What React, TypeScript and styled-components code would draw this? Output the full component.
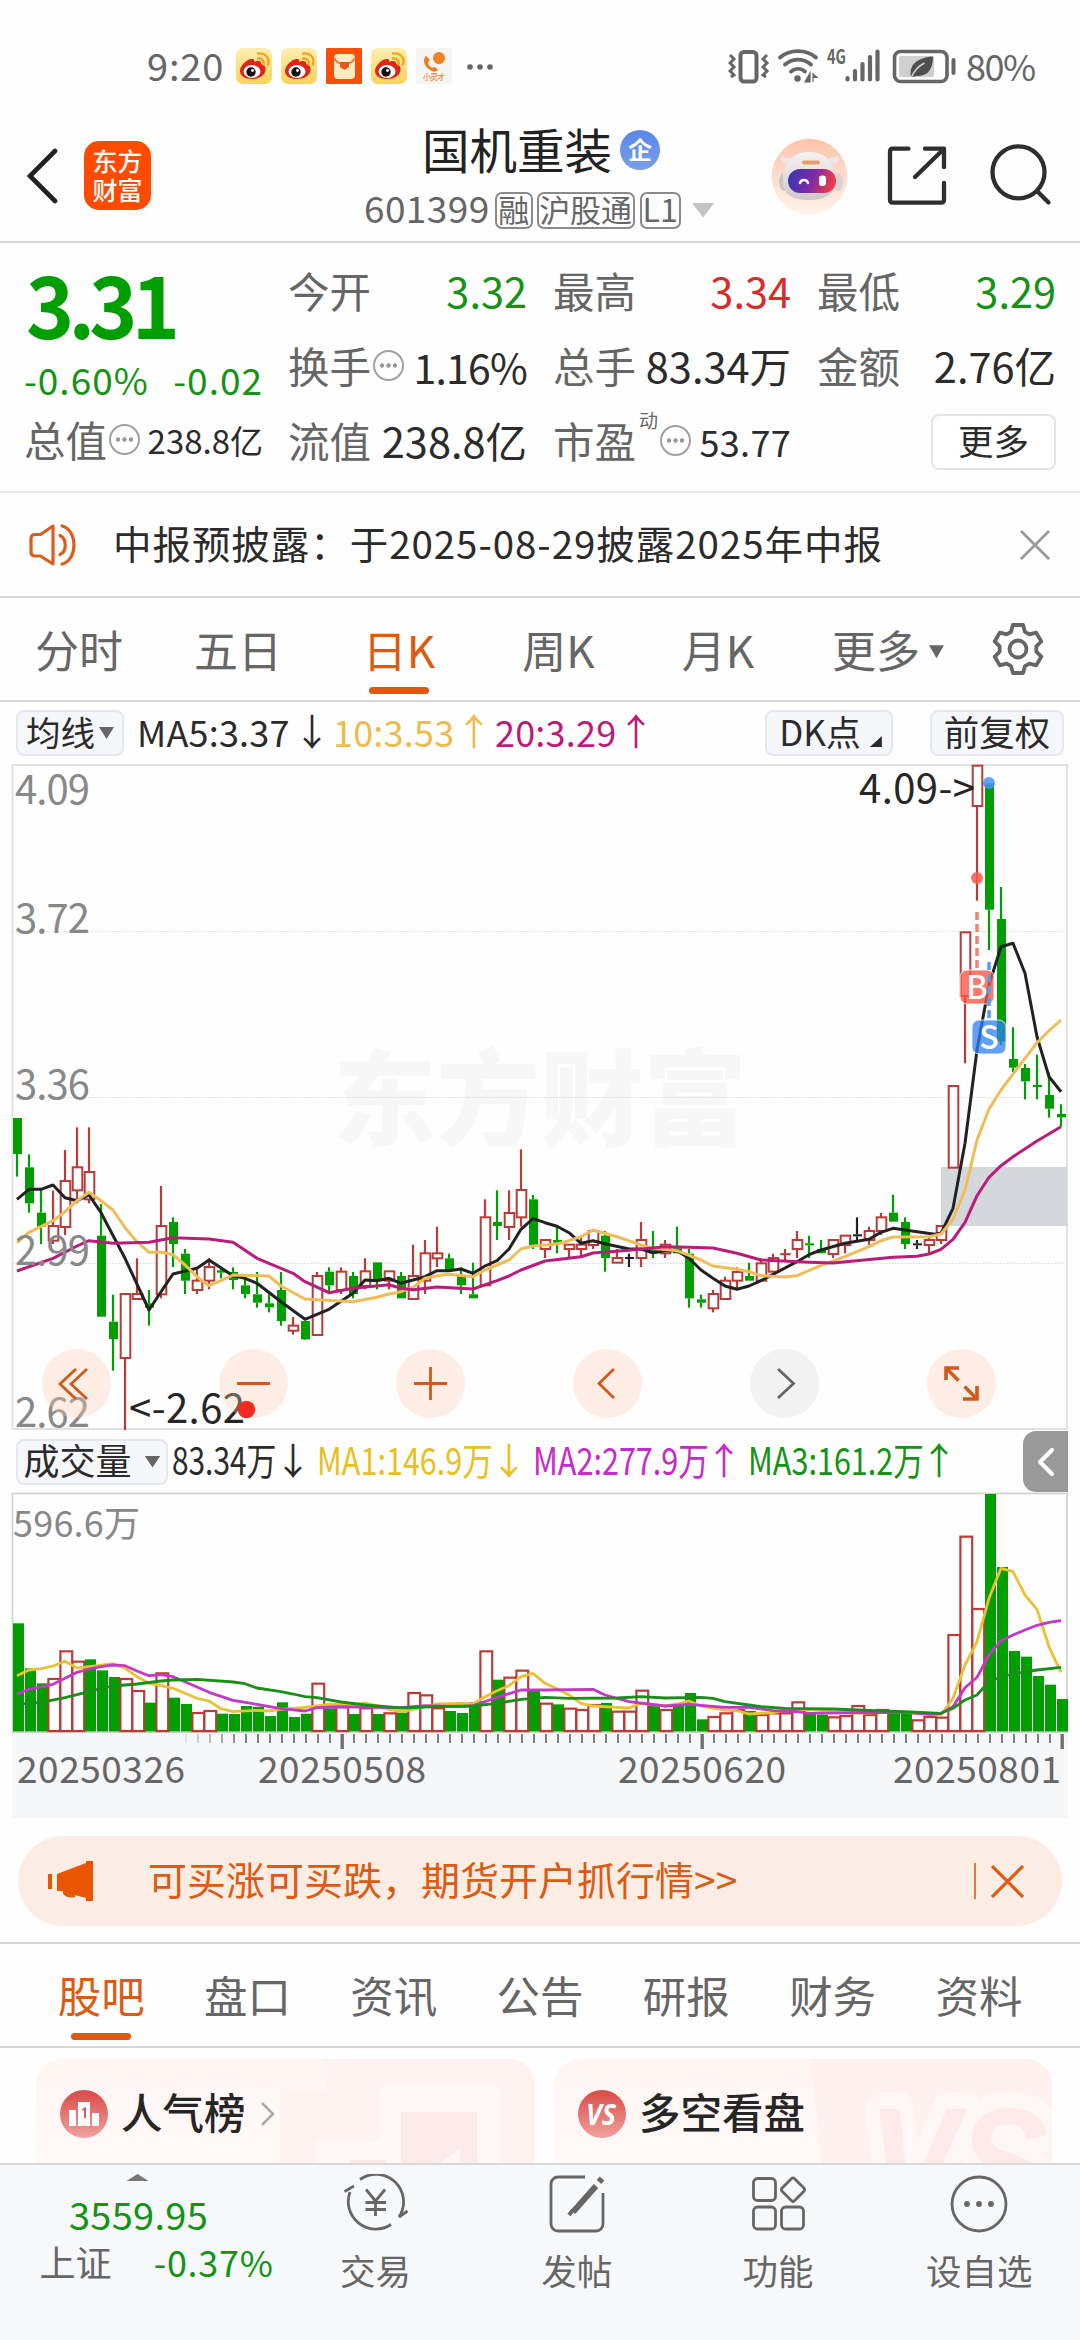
import React from 'react';
import styled, { createGlobalStyle } from 'styled-components';

const FONT = '"Noto Sans CJK SC", "Noto Sans", sans-serif';
const GREEN = '#009e00';
const TEXT_GREEN = '#149314';
const RED = '#b93a36';
const ORANGE = '#dc5a12';
const GREY = '#666';
const INK = '#2b2b2b';

const Global = createGlobalStyle`
  html, body { margin: 0; padding: 0; background: #fefefe; }
  * { box-sizing: border-box; }
  svg { display: block; flex: none; }
`;

const Page = styled.main`
  width: 1080px;
  height: 2340px;
  overflow: hidden;
  display: flex;
  flex-direction: column;
  font-family: ${FONT};
  color: ${INK};
`;

const T = styled.span<{ $s: number; $c?: string; $w?: number; $ls?: number; $x?: number; $ml?: number; $mt?: number }>`
  display: block;
  flex: none;
  line-height: 1;
  padding-bottom: 0.12em;
  white-space: nowrap;
  font-size: ${p => p.$s}px;
  color: ${p => p.$c || 'inherit'};
  font-weight: ${p => p.$w || 400};
  letter-spacing: ${p => p.$ls || 0}px;
  margin-left: ${p => p.$ml || 0}px;
  margin-top: ${p => p.$mt || 0}px;
  ${p => p.$x ? `width: ${p.$x}px;` : ''}
`;

const Squeezed = styled(T)<{ $scale: number }>`
  transform: scaleX(${p => p.$scale});
  transform-origin: left center;
`;

const Caret = styled.i<{ $w: number; $h: number; $c: string; $ml?: number; $up?: boolean }>`
  width: ${p => p.$w}px;
  height: ${p => p.$h}px;
  margin-left: ${p => p.$ml || 0}px;
  background: ${p => p.$c};
  clip-path: ${p => p.$up ? 'polygon(50% 0, 100% 100%, 0 100%)' : 'polygon(0 0, 100% 0, 50% 100%)'};
`;

/* ---------- status bar ---------- */
const StatusBar = styled.div`
  height: 100px;
  padding: 35px 46px 0 147px;
  display: flex;
  justify-content: space-between;
`;
const StatusGroup = styled.div`
  height: 64px;
  display: flex;
  align-items: center;
`;
const AppIcons = styled.div`
  display: flex;
  gap: 9px;
  margin: 0 15px 2px 12px;
`;

const Weibo = () => (
  <svg width="36" height="36" viewBox="0 0 36 36">
    <defs>
      <linearGradient id="wb" x1="0" y1="0" x2="0" y2="1">
        <stop offset="0" stopColor="#fdeeb4" /><stop offset="1" stopColor="#fbd455" />
      </linearGradient>
    </defs>
    <rect width="36" height="36" rx="7" fill="url(#wb)" />
    <path d="M4 23c0-5 6-11 11-12 3-.5 4 1 3 3 3-1.500 8-1.500 7 2 4 1 5 3 4.500 6.500C28.500 28 23 31 16 31 9 31 4 28 4 23z" fill="#e2231a" />
    <ellipse cx="16" cy="23.500" rx="8.500" ry="6.500" fill="#fff" />
    <circle cx="15" cy="24" r="4.700" fill="#111" />
    <circle cx="16.500" cy="22.500" r="1.400" fill="#fff" />
    <path d="M22 10.500c4-.5 6.500 2 5.500 6M22 5.500c7-1 12 4 10 11" fill="none" stroke="#f5a31a" strokeWidth="2.400" strokeLinecap="round" />
  </svg>
);

const Pouch = () => (
  <svg width="36" height="36" viewBox="0 0 36 36">
    <rect width="36" height="36" rx="1" fill="#fa4f08" />
    <rect x="8" y="6" width="21" height="25" rx="4" fill="#fdebc3" />
    <path d="M8 10c2 4 6 6 10.500 6S27 14 29 10" fill="none" stroke="#f2702a" strokeWidth="1.800" />
    <path d="M14 14h9v5l-4.500 3-4.500-3z" fill="#e8571a" />
  </svg>
);

const Caller = () => (
  <svg width="36" height="36" viewBox="0 0 36 36">
    <rect width="36" height="36" rx="3" fill="#f7f5f3" />
    <circle cx="23" cy="10" r="6" fill="#f08223" />
    <path d="M10 8c-4 3-2 12 6 15 2 1 4 1 6-1l-3-3-3 1c-2-1-4-4-4-6l2-2z" fill="#ee7a1c" />
    <path d="M19 15l3-2 4 3z" fill="#f08223" />
    <text x="7" y="32" fontSize="8" fontWeight="500" fill="#ee8a3a" fontFamily={FONT} textLength="22">小灵才</text>
  </svg>
);

const SystemIcons = () => (
  <svg width="230" height="40" viewBox="728 47 230 40" fill="none" stroke={GREY}>
    <rect x="740.500" y="52" width="16" height="29.500" rx="3.500" strokeWidth="4" />
    <path d="M730 55l4 4-4 4 4 4-4 4 4 4-3 2M767 55l-4 4 4 4-4 4 4 4-4 4 3 2" strokeWidth="3" />
    <path d="M780 57.500c10-8.500 26-8.500 36 0M785 64.500c8-6.500 18-6.500 26 0M791 71.500c4.500-3.500 10-3.500 14 0" strokeWidth="3.800" strokeLinecap="round" />
    <circle cx="797.500" cy="78.500" r="3.200" fill={GREY} stroke="none" />
    <path d="M810 73v9h-5zM813 73v9M813 74l4 3.500h-4z" strokeWidth="1.200" fill={GREY} />
    <text x="827" y="64" fontSize="20" fontWeight="700" fill={GREY} stroke="none" textLength="19" lengthAdjust="spacingAndGlyphs" fontFamily={FONT}>4G</text>
    <g strokeWidth="4.200" strokeLinecap="round">
      <path d="M847.500 78v1.500M855 71v8.500M862.500 64v15.500M870 57v22.500M877.500 51.500v28" />
    </g>
    <rect x="894.500" y="51.500" width="52.500" height="30" rx="6" strokeWidth="3.600" />
    <rect x="899" y="56" width="35" height="21" rx="2" fill="#cfcfcf" stroke="none" />
    <path d="M911 77c-2-11 4-19 22-20.500 0 14-6 20-17 19.500l-3 1z" fill="#4f4f4f" stroke="none" />
    <path d="M911.500 77c3-7 7-11 13-14" stroke="#cfcfcf" strokeWidth="1.600" />
    <path d="M953.500 60v13" strokeWidth="4" strokeLinecap="round" />
  </svg>
);

/* ---------- header ---------- */
const Header = styled.header`
  height: 143px;
  border-bottom: 2px solid #d6d6d6;
  display: flex;
`;
const HeaderLeft = styled.div`
  width: 364px;
  padding: 41px 0 0 27px;
  display: flex;
  gap: 26px;
  align-items: flex-start;
`;
const Logo = styled.div`
  width: 67px;
  height: 69px;
  border-radius: 15px;
  background: #ff4a02;
  display: flex;
  flex-direction: column;
  align-items: center;
  padding-top: 7px;
  gap: 1px;
`;
const HeaderCenter = styled.div`
  width: 407px;
  padding-top: 25px;
`;
const TitleRow = styled.div`
  height: 53px;
  padding-left: 58px;
  display: flex;
  align-items: center;
`;
const Verified = styled.div`
  width: 40px;
  height: 40px;
  margin: 0 0 3px 8px;
  border-radius: 50%;
  background: linear-gradient(#5a87ea, #7aa0e8);
  display: flex;
  align-items: center;
  justify-content: center;
`;
const CodeRow = styled.div`
  height: 38px;
  margin-top: 13px;
  display: flex;
  align-items: center;
`;
const Tag = styled.div<{ $w: number; $ml: number }>`
  width: ${p => p.$w}px;
  height: 37px;
  margin-left: ${p => p.$ml}px;
  border: 2px solid #8a8a8a;
  border-radius: 7px;
  display: flex;
  align-items: center;
  justify-content: center;
`;
const HeaderRight = styled.div`
  padding-top: 38px;
  display: flex;
  align-items: flex-start;
`;

const Robot = () => (
  <svg width="77" height="77" viewBox="0 0 77 77">
    <defs>
      <linearGradient id="rb" x1="0" y1="0" x2="0" y2="1"><stop offset="0" stopColor="#fcc5aa" /><stop offset="1" stopColor="#fff3ec" /></linearGradient>
      <linearGradient id="rv" x1="0" y1="0" x2="1" y2="0.2"><stop offset="0" stopColor="#2f3ab5" /><stop offset=".55" stopColor="#7a2aa8" /><stop offset="1" stopColor="#ea3b4c" /></linearGradient>
      <linearGradient id="rh" x1="0" y1="0" x2="0" y2="1"><stop offset="0" stopColor="#f6f2f3" /><stop offset="1" stopColor="#cfc8cb" /></linearGradient>
    </defs>
    <circle cx="38.500" cy="38.500" r="37.800" fill="url(#rb)" />
    <path d="M9 17c0 5 2 8 6 9l5-6c-5 0-9-1-11-3zM67 17c1 5 0 8-4 10l-6-7c5 0 8-1 10-3z" fill="#ece6e8" />
    <ellipse cx="13" cy="44" rx="5" ry="9" fill="#cbc4c8" />
    <ellipse cx="67" cy="44" rx="5" ry="9" fill="#d8d2d5" />
    <path d="M38 14c16 0 26 10 27 26 1 14-8 22-27 22S11 55 12 40c1-16 10-26 26-26z" fill="url(#rh)" />
    <rect x="31" y="22.500" width="18" height="4" rx="2" fill="#e3a06a" />
    <rect x="17" y="31" width="48" height="24" rx="12" fill="url(#rv)" />
    <path d="M29 45c1-4 7-4 8 0" fill="none" stroke="#fff" strokeWidth="2.500" strokeLinecap="round" />
    <rect x="48" y="37.500" width="7" height="10.500" rx="3" fill="#fff" />
  </svg>
);

/* ---------- quote ---------- */
const Quote = styled.section`
  height: 250px;
  padding: 13px 24px 0 24px;
  border-bottom: 2px solid #e9e9e9;
  display: grid;
  grid-template-columns: 239px 794px;
`;
const QuoteMain = styled.div`
  display: grid;
  grid-template-rows: 102px 47px 75px;
`;
const QuoteGrid = styled.div`
  margin-left: 25px;
  width: 768px;
  display: grid;
  grid-template-columns: 239px 238px 239px;
  grid-template-rows: repeat(3, 75px);
  column-gap: 26px;
`;
const Cell = styled.div<{ $end?: boolean }>`
  display: flex;
  align-items: center;
  justify-content: ${p => p.$end ? 'flex-end' : 'space-between'};
`;
const Label = styled.div`
  display: flex;
  align-items: center;
  gap: 2px;
`;
const Info = styled.i<{ $lift?: number }>`
  width: 31px;
  height: 31px;
  margin-bottom: ${p => p.$lift || 0}px;
  border: 2px solid #a0a0a0;
  border-radius: 50%;
  background:
    radial-gradient(circle at 7px 13.500px, #999 1.900px, transparent 2.500px),
    radial-gradient(circle at 13.500px 13.500px, #999 1.900px, transparent 2.500px),
    radial-gradient(circle at 20px 13.500px, #999 1.900px, transparent 2.500px);
`;
const Sup = styled.span`
  align-self: flex-start;
  font-size: 19px;
  line-height: 20px;
  color: ${GREY};
  margin: -10px 0 0 1px;
`;
const MoreButton = styled.button`
  width: 125px;
  height: 56px;
  margin-bottom: 4px;
  padding: 0;
  border: 2px solid #e3e5e6;
  border-radius: 8px;
  background: #fff;
  font-family: inherit;
  color: ${INK};
  display: flex;
  align-items: center;
  justify-content: center;
`;

/* ---------- notice ---------- */
const Notice = styled.section`
  height: 105px;
  padding: 0 30px 0 29px;
  border-bottom: 2px solid #d6d6d6;
  display: flex;
  align-items: center;
`;
const Spacer = styled.div`flex: 1;`;

/* ---------- period tabs ---------- */
const Periods = styled.nav`
  height: 104px;
  border-bottom: 2px solid #d6d6d6;
  display: flex;
`;
const Period = styled.div<{ $w: number; $on?: boolean }>`
  width: ${p => p.$w}px;
  height: 104px;
  display: flex;
  flex-direction: column;
  align-items: center;
  padding-top: 29px;
  color: ${p => p.$on ? ORANGE : GREY};
`;
const Inline = styled.div`
  display: flex;
  align-items: center;
`;
const Underline = styled.i`
  width: 60px;
  height: 7px;
  flex: none;
  border-radius: 4px;
  margin-top: 11px;
  background: ${ORANGE};
`;
const GearBox = styled.div`
  padding: 24px 0 0 14px;
`;

/* ---------- indicator rows ---------- */
const Indicators = styled.div`
  height: 62px;
  padding: 0 16px;
  display: flex;
  align-items: center;
`;
const Chip = styled.button<{ $w: number; $ml?: number }>`
  width: ${p => p.$w}px;
  height: 46px;
  margin-left: ${p => p.$ml || 0}px;
  padding: 0;
  flex: none;
  border: 2px solid #e4e7ec;
  border-radius: 8px;
  background: #f6f7fa;
  font-family: inherit;
  color: ${INK};
  display: flex;
  align-items: center;
  justify-content: center;
`;
const Corner = styled.i`
  width: 12px;
  height: 11px;
  margin: 17px 0 0 9px;
  background: ${INK};
  clip-path: polygon(100% 0, 100% 100%, 0 100%);
`;
const Arrow = styled.span<{ $c: string; $ml: number }>`
  width: 20px;
  margin-left: ${p => p.$ml}px;
  display: flex;
  justify-content: center;
  font-size: 37px;
  line-height: 1;
  padding-bottom: 0.12em;
  color: ${p => p.$c};
`;
const VolumeRow = styled.div`
  height: 61px;
  padding-left: 16px;
  display: flex;
  align-items: center;
`;
const Collapse = styled.div`
  width: 45px;
  height: 61px;
  margin-right: 12px;
  border-radius: 13px 0 0 13px;
  background: #999;
  display: flex;
  align-items: center;
  justify-content: center;
`;

/* ---------- main chart ---------- */
type Kind = 'G' | 'R' | 'K';
/* kind, body top, body bottom, wick top, wick bottom; three units per pixel */
const CANDLES: [Kind, number, number, number, number][] = [
  ['G', 264, 372, 264, 440], ['G', 412, 520, 373, 548], ['G', 548, 590, 480, 642], ['R', 588, 632, 482, 642],
  ['R', 453, 591, 360, 615], ['R', 412, 481, 292, 520], ['R', 426, 508, 292, 520], ['G', 617, 860, 522, 860],
  ['G', 875, 927, 794, 1022], ['R', 792, 984, 792, 1200], ['R', 792, 807, 685, 807], ['G', 820, 833, 780, 887],
  ['R', 588, 793, 468, 805], ['G', 576, 642, 562, 711], ['G', 671, 752, 657, 792], ['R', 752, 780, 720, 792],
  ['R', 711, 752, 685, 778], ['G', 721, 728, 712, 745], ['G', 726, 750, 712, 778], ['G', 766, 792, 740, 805],
  ['G', 793, 818, 726, 833], ['G', 820, 832, 793, 847], ['G', 780, 873, 726, 887], ['R', 887, 902, 861, 914],
  ['G', 873, 928, 873, 930], ['R', 738, 915, 726, 915], ['G', 725, 766, 712, 790], ['R', 725, 780, 712, 792],
  ['G', 738, 792, 726, 805], ['R', 724, 768, 685, 778], ['G', 697, 752, 697, 778], ['R', 724, 752, 724, 778],
  ['G', 738, 805, 726, 805], ['R', 738, 807, 644, 807], ['R', 670, 752, 630, 792], ['R', 670, 685, 590, 711],
  ['G', 685, 722, 671, 725], ['G', 738, 766, 712, 792], ['G', 793, 805, 698, 805], ['R', 562, 766, 508, 766],
  ['G', 576, 588, 481, 630], ['R', 549, 591, 481, 630], ['R', 480, 562, 358, 590], ['G', 508, 645, 495, 657],
  ['R', 630, 657, 630, 684], ['G', 630, 638, 588, 670], ['R', 644, 657, 644, 684], ['R', 644, 657, 617, 680],
  ['R', 603, 645, 603, 657], ['G', 617, 684, 603, 725], ['R', 684, 698, 657, 698], ['K', 681, 687, 671, 711],
  ['R', 630, 684, 576, 711], ['G', 657, 670, 603, 684], ['R', 644, 670, 630, 684], ['G', 655, 670, 590, 670],
  ['G', 671, 805, 657, 833], ['G', 808, 818, 794, 833], ['R', 792, 835, 780, 847], ['R', 752, 807, 740, 807],
  ['R', 726, 752, 712, 778], ['G', 738, 752, 698, 752], ['R', 700, 752, 685, 752], ['R', 684, 725, 671, 725],
  ['R', 670, 671, 657, 695], ['R', 630, 657, 603, 684], ['G', 640, 646, 617, 684], ['G', 657, 670, 630, 670],
  ['R', 630, 672, 630, 684], ['R', 617, 645, 617, 670], ['K', 613, 619, 562, 630], ['R', 603, 630, 590, 645],
  ['R', 562, 603, 549, 615], ['G', 548, 575, 494, 575], ['G', 576, 642, 562, 657], ['K', 640, 646, 630, 657],
  ['R', 630, 645, 620, 670], ['R', 588, 630, 588, 642], ['R', 168, 413, 168, 413], ['R', -293, -102, -293, 100],
  ['R', -793, -672, -793, -388], ['G', -740, -361, -740, -240], ['G', -333, 35, -429, 45], ['G', 87, 113, -8, 126],
  ['G', 114, 154, 102, 208], ['G', 165, 171, 74, 208], ['G', 195, 236, 128, 263], ['G', 252, 262, 223, 290],
];
type Pts = [number, number][];
const MA5: Pts = [[0, 508], [1, 478], [2, 478], [3, 465], [4, 503], [5, 512], [6, 495], [7, 548], [9, 685], [11, 840], [12, 785], [13, 732], [15, 715], [16, 690], [18, 737], [19, 745], [20, 760], [22, 815], [24, 868], [25, 853], [26, 838], [28, 790], [29, 750], [30, 752], [31, 745], [32, 760], [34, 740], [35, 722], [36, 722], [37, 717], [38, 730], [39, 708], [40, 692], [41, 657], [42, 598], [43, 566], [44, 578], [45, 589], [46, 608], [47, 640], [48, 632], [49, 641], [51, 657], [52, 657], [53, 668], [54, 662], [55, 662], [56, 685], [57, 720], [58, 745], [59, 768], [60, 778], [61, 768], [62, 752], [64, 714], [65, 695], [66, 674], [67, 660], [69, 640], [71, 628], [72, 607], [73, 595], [75, 605], [76.5, 613], [77, 610], [78, 535], [79, 340], [80, 60], [81, -135], [82, -250], [83, -260], [84, -170], [85, 20], [86, 140], [87, 185]];
const MA10: Pts = [[0, 638], [1, 607], [2, 590], [3, 572], [4, 545], [5, 512], [6, 487], [7, 512], [8, 540], [9, 593], [10, 635], [11, 667], [12, 667], [13, 674], [14, 705], [15, 740], [16, 767], [17, 752], [18, 735], [21, 738], [22, 768], [24, 807], [28, 815], [30, 802], [31, 792], [32, 785], [33, 772], [34, 745], [35, 737], [36, 733], [38, 740], [39, 720], [41, 690], [42, 657], [43, 648], [45, 642], [46, 632], [47, 620], [48, 600], [50, 620], [52, 645], [53, 655], [55, 662], [57, 690], [58, 708], [60, 718], [61, 725], [62, 737], [64, 741], [65, 737], [67, 706], [69, 680], [71, 650], [72, 632], [73, 621], [76, 620], [77, 612], [78, 568], [79, 480], [80, 330], [81, 237], [82, 180], [84, 85], [85, 38], [86, 2], [87, -30]];
const MA20: Pts = [[0, 723], [3, 685], [5, 648], [6, 632], [8, 640], [11, 637], [12, 630], [13, 623], [16, 627], [18, 637], [20, 685], [23, 730], [24, 755], [26, 788], [28, 775], [31, 764], [32, 775], [33, 779], [35, 771], [38, 777], [40, 752], [41, 738], [42, 720], [44, 693], [47, 680], [48, 669], [51, 661], [54, 650], [56, 652], [58, 654], [60, 670], [62, 690], [66, 697], [68, 699], [73, 682], [75, 679], [76, 672], [77, 658], [78, 628], [79, 577], [80, 497], [81, 442], [82, 407], [83, 380], [85, 333], [87, 290]];

const barX = (i: number) => 17 + 12 * i;
const priceY = (v: number) => 1030 + v / 3;
const volY = (v: number) => 1420 + v / 3;
const line = (pts: Pts, y: (v: number) => number) => pts.map(([i, v]) => `${barX(i)},${y(v).toFixed(1)}`).join(' ');
const KIND_COLOR = { G: GREEN, R: RED, K: '#222' };

const Candle = ({ i, c }: { i: number; c: [Kind, number, number, number, number] }) => {
  const [k, t, b, wt, wb] = c;
  const x = barX(i);
  const col = KIND_COLOR[k];
  const top = priceY(t);
  const h = Math.max((b - t) / 3, 1.6);
  return (
    <g>
      {wt < t && <path d={`M${x} ${priceY(wt)}V${top}`} stroke={col} strokeWidth="2.200" />}
      {wb > b && <path d={`M${x} ${priceY(b)}V${priceY(wb)}`} stroke={col} strokeWidth="2.200" />}
      {k === 'R'
        ? <rect x={x - 4.3} y={top} width="9.600" height={h} fill={h < 3 ? col : '#fefefe'} stroke={col} strokeWidth={h < 3 ? 0.6 : 2} />
        : <rect x={x - 4} y={top} width="9" height={h} fill={col} />}
    </g>
  );
};

const ChartArea = styled.div`
  position: relative;
  height: 667px;
`;
const Controls = styled.div`
  position: absolute;
  left: 42px;
  top: 585px;
  display: flex;
  gap: 108px;
`;
const Control = styled.button<{ $off?: boolean }>`
  width: 69px;
  height: 69px;
  padding: 0;
  border: 0;
  border-radius: 50%;
  background: ${p => p.$off ? 'rgba(230, 230, 230, .5)' : 'rgba(255, 205, 180, .34)'};
  display: flex;
  align-items: center;
  justify-content: center;
`;
const GLYPHS = [
  'M34 20L18 35L34 50M45 20L29 35L45 50',
  'M18 34.500H51',
  'M18 34.500H51M34.500 18V51',
  'M41 20L26 34.500L41 49',
  'M28 20L43.500 34.500L28 49',
  'M19 31V19H32M19 19L31.500 31.500M37.500 37.500L50 50M50 37V50H36',
];

const MainChart = () => (
  <ChartArea>
    <svg width="1080" height="667" viewBox="0 764 1080 667" fontFamily={FONT}>
      <text x="333" y="1138" fontSize="104" fontWeight="900" fill="#f7f7f7" textLength="414" lengthAdjust="spacingAndGlyphs">东方财富</text>
      <g stroke="#d9d9d9" strokeWidth="1.200" strokeDasharray="1.500 1.500">
        <path d="M13 931.500H1067M13 1097.500H1067M13 1263.500H1067" />
      </g>
      <rect x="12.500" y="765" width="1054.500" height="664" fill="none" stroke="#e2e2e2" strokeWidth="2" />
      <rect x="941" y="1167" width="126" height="59" fill="#d4d7dc" />
      {CANDLES.map((c, i) => <Candle key={i} i={i} c={c} />)}
      <g fill="none" strokeWidth="3" strokeLinejoin="round">
        <polyline points={line(MA5, priceY)} stroke="#222" />
        <polyline points={line(MA10, priceY)} stroke="#efbd58" />
        <polyline points={line(MA20, priceY)} stroke="#bb1c7a" />
      </g>
      <g fill="#888" fontSize="40">
        <text x="15" y="804" textLength="75">4.09</text>
        <text x="15" y="933" textLength="75">3.72</text>
        <text x="15" y="1099" textLength="75">3.36</text>
        <text x="15" y="1265" textLength="75">2.99</text>
        <text x="15" y="1427" textLength="75">2.62</text>
      </g>
      <g fill="#262626" fontSize="40">
        <text x="859" y="803" textLength="116">4.09-&gt;</text>
        <text x="129" y="1423" textLength="116">&lt;-2.62</text>
      </g>
      <path d="M977 912V970" stroke="#ef8478" strokeWidth="3.500" strokeDasharray="8 4" />
      <circle cx="977" cy="878" r="6" fill="#fb5a4c" fillOpacity=".85" />
      <circle cx="989" cy="783" r="6" fill="#4690fa" fillOpacity=".85" />
      <rect x="960" y="970" width="34" height="34" rx="7" fill="#fb5443" fillOpacity=".78" stroke="#fff" strokeOpacity=".8" />
      <path d="M989 962V1020" stroke="#5a9cf0" strokeWidth="3.500" strokeDasharray="8 4" />
      <rect x="972" y="1020" width="34" height="34" rx="7" fill="#2d80f6" fillOpacity=".75" stroke="#fff" strokeOpacity=".8" />
      <g fill="#fff" fontWeight="500" fontSize="32" textAnchor="middle">
        <text x="977" y="999">B</text>
        <text x="989" y="1049">S</text>
      </g>
    </svg>
    <Controls>
      {GLYPHS.map((d, i) => (
        <Control key={i} $off={i === 4}>
          <svg width="69" height="69" viewBox="0 0 69 69">
            <path d={d} fill="none" stroke={i === 4 ? GREY : '#d05a1c'} strokeWidth={i === 5 ? 3.6 : 2.8} />
            {i === 1 && <circle cx="27.500" cy="60.500" r="8.700" fill="#f22a22" />}
          </svg>
        </Control>
      ))}
    </Controls>
  </ChartArea>
);

/* ---------- volume chart ---------- */
const VOLUMES = 'G610 G745 G790 R777 R694 R725 G718 G751 G771 R777 R813 G848 R760 G833 G852 R879 R873 G881 G882 G858 G860 G888 G847 G891 G881 R791 G865 R862 G882 R865 G882 R880 G878 R819 R826 R865 G873 G879 G847 R694 G779 R773 R752 G812 R851 G853 R866 R870 R855 G849 R875 R875 R812 G858 R870 G858 G819 G898 R891 R880 R870 G873 R885 R880 R880 R847 G882 G884 R892 R888 R858 R885 R870 G877 G880 R901 R891 R893 R645 R350 R567 G222 G441 G693 G710 G768 G794 G837'.split(' ');
const V1: Pts = [[0, 767], [1, 750], [2, 746], [3, 738], [4, 724], [5, 744], [6, 740], [8, 731], [9, 745], [10, 770], [11, 790], [12, 797], [13, 805], [14, 820], [15, 835], [16, 843], [17, 866], [18, 875], [20, 871], [21, 873], [22, 868], [24, 862], [25, 858], [26, 853], [28, 855], [29, 849], [30, 857], [31, 868], [32, 875], [33, 868], [34, 860], [35, 852], [37, 850], [38, 852], [39, 830], [40, 812], [41, 797], [42, 770], [43, 760], [44, 790], [45, 806], [46, 825], [47, 850], [48, 858], [50, 862], [51, 864], [52, 850], [54, 858], [55, 852], [56, 843], [57, 858], [59, 870], [60, 872], [61, 882], [63, 878], [64, 870], [66, 868], [68, 875], [70, 880], [72, 878], [74, 877], [75, 880], [77, 885], [78, 835], [79, 735], [80, 665], [81, 535], [82, 445], [83, 455], [84, 525], [85, 568], [86, 680], [87, 757]];
const V2: Pts = [[0, 823], [1, 808], [3, 793], [4, 775], [5, 757], [6, 747], [7, 740], [8, 735], [9, 737], [10, 753], [11, 767], [12, 764], [13, 770], [14, 785], [16, 817], [18, 841], [20, 853], [22, 866], [24, 873], [25, 863], [27, 860], [29, 862], [32, 863], [34, 857], [37, 860], [38, 857], [39, 845], [40, 832], [42, 810], [44, 810], [48, 808], [49, 825], [51, 845], [54, 858], [56, 853], [59, 862], [61, 862], [63, 872], [65, 875], [66, 880], [70, 878], [74, 877], [76, 883], [77, 880], [78, 860], [79, 803], [80, 772], [81, 705], [82, 662], [83, 645], [84, 630], [85, 616], [86, 607], [87, 602]];
const V3: Pts = [[0, 853], [2, 847], [4, 833], [6, 815], [7, 805], [8, 798], [10, 792], [12, 783], [13, 780], [15, 778], [18, 786], [19, 791], [20, 804], [22, 815], [23, 822], [24, 830], [25, 833], [27, 846], [29, 855], [32, 864], [35, 860], [38, 858], [40, 850], [42, 838], [44, 832], [46, 835], [50, 834], [52, 830], [54, 834], [57, 832], [58, 835], [59, 845], [61, 855], [62, 860], [64, 865], [68, 867], [70, 870], [72, 873], [74, 875], [77, 880], [78, 865], [79, 840], [80, 825], [81, 785], [82, 770], [83, 762], [85, 750], [87, 742]];

const VolumeChart = () => (
  <svg width="1080" height="326" viewBox="0 1492 1080 326" fontFamily={FONT}>
    <rect x="12.500" y="1493.500" width="1054.500" height="239" fill="none" stroke="#cfcfcf" strokeWidth="1.600" />
    <rect x="12" y="1733.500" width="1056" height="84.500" fill="#f6f7f9" />
    <text x="13" y="1537" fontSize="36" fill="#888" textLength="127">596.6万</text>
    {VOLUMES.map((v, i) => {
      const y = volY(Number(v.slice(1)));
      const x = barX(i);
      return v[0] === 'G'
        ? <rect key={i} x={x - 4} y={y} width="11" height={1731.5 - y} fill={GREEN} />
        : <rect key={i} x={x - 4.6} y={y} width="11.800" height={1731 - y} fill="#fefefe" stroke="#bd3a36" strokeWidth="2.200" />;
    })}
    <g fill="none" strokeWidth="2.800" strokeLinejoin="round">
      <polyline points={line(V1, volY)} stroke="#e8c233" />
      <polyline points={line(V2, volY)} stroke="#c437c9" />
      <polyline points={line(V3, volY)} stroke="#1a8e1a" />
    </g>
    {VOLUMES.map((_, i) => i > 13 && (
      i === 27 || i === 57 || i === 87
        ? <rect key={i} x={16.5 + 12 * i} y="1734" width="3.400" height="15" fill="#707070" />
        : <rect key={i} x={17 + 12 * i} y="1734" width="2" height="9" fill="#808080" opacity={Math.min(1, (i - 13) / 6)} />
    ))}
    <g fontSize="37" fill="#666">
      <text x="17" y="1782.500" textLength="168">20250326</text>
      <text x="258" y="1782.500" textLength="168">20250508</text>
      <text x="618" y="1782.500" textLength="168">20250620</text>
      <text x="893" y="1782.500" textLength="168">20250801</text>
    </g>
  </svg>
);

/* ---------- banner ---------- */
const Banner = styled.div`
  height: 90px;
  margin: 18px 18px 16px;
  padding: 0 38px 0 30px;
  flex: none;
  border-radius: 45px;
  background: #fcede4;
  color: ${ORANGE};
  display: flex;
  align-items: center;
`;
const Rule = styled.i`
  width: 2px;
  height: 36px;
  margin-right: 15px;
  background: #dd7a42;
`;

/* ---------- info tabs ---------- */
const InfoTabs = styled.nav`
  height: 106px;
  flex: none;
  border-top: 2px solid #d6d6d6;
  border-bottom: 2px solid #d6d6d6;
  padding-left: 28px;
  display: flex;
`;
const InfoTab = styled.div<{ $on?: boolean }>`
  width: 146.300px;
  display: flex;
  flex-direction: column;
  align-items: center;
  padding-top: 29px;
  color: ${p => p.$on ? ORANGE : GREY};
`;

/* ---------- cards ---------- */
const Cards = styled.div`
  height: 115px;
  flex: none;
  padding: 11px 28px 0 36px;
  display: grid;
  grid-template-columns: 499px 498px;
  gap: 19px;
`;
const Card = styled.div`
  position: relative;
  overflow: hidden;
  border-radius: 26px 26px 0 0;
  background: linear-gradient(#fff6f4, #fff9f7);
  padding: 6px 0 0 24px;
  display: flex;
  align-items: center;
`;
const Art = styled.div`
  position: absolute;
  right: 0;
  top: 0;
`;
const More = styled.div`
  margin-left: 15px;
`;

/* ---------- bottom bar ---------- */
const BottomBar = styled.footer`
  height: 177px;
  flex: none;
  border-top: 2px solid #d6d8da;
  background: #f6f8fa;
  display: flex;
  color: ${GREY};
`;
const IndexBox = styled.div`
  width: 275px;
  padding-top: 9px;
  display: flex;
  flex-direction: column;
  align-items: center;
`;
const IndexRow = styled.div`
  width: 234px;
  margin: 5px 0 0 38px;
  display: flex;
  align-items: center;
  justify-content: space-between;
  color: ${TEXT_GREEN};
`;
const Action = styled.div`
  width: 201.200px;
  padding-top: 9px;
  display: flex;
  flex-direction: column;
  align-items: center;
  gap: 18px;
`;

const ACTION_ICONS = [
  <g key="a">
    <path d="M17 6.500A27.500 27.500 0 0 1 56 44M48 51.500A27.500 27.500 0 0 1 7 19" />
    <path d="M1.500 18.500L11 13M56 44L64.500 38" />
    <path d="M23 16.500L32.500 28L42 16.500M32.500 28V43M22.500 29.500H43M22.500 36.500H43" />
  </g>,
  <g key="b">
    <path d="M41 4H14a7 7 0 0 0-7 7v40a7 7 0 0 0 7 7h38a7 7 0 0 0 7-7V20" />
    <path d="M52 13L29 39" strokeWidth="6" /><path d="M55 9L58 5.500" strokeWidth="6" /><path d="M29 37l-4 5" strokeWidth="4" />
  </g>,
  <g key="c">
    <rect x="8.500" y="5.500" width="22" height="22" rx="4" />
    <rect x="8.500" y="34" width="22" height="22" rx="4" />
    <rect x="36.500" y="34" width="22" height="22" rx="4" />
    <path d="M46.600 5.500q1.400-1.400 2.800 0l9.500 9.500q1.500 1.600 0 3.200l-9.500 9.500q-1.400 1.400-2.800 0l-9.500-9.500q-1.500-1.600 0-3.200z" />
  </g>,
  <g key="d">
    <circle cx="33" cy="31" r="27" />
    <g fill={GREY} stroke="none"><circle cx="21" cy="31" r="2.900" /><circle cx="33" cy="31" r="2.900" /><circle cx="45" cy="31" r="2.900" /></g>
  </g>,
];

const gearPath = () => {
  const pts: string[] = [];
  for (let k = 0; k < 6; k++) {
    [[-22, 18.5], [-12, 24.5], [12, 24.5], [22, 18.5]].forEach(([a, r]) => {
      const th = ((k * 60 + a - 90) * Math.PI) / 180;
      pts.push(`${(27 + r * Math.cos(th)).toFixed(1)},${(27 + r * Math.sin(th)).toFixed(1)}`);
    });
  }
  return `M${pts.join('L')}Z`;
};

const Cross = ({ size, color }: { size: number; color: string }) => (
  <svg width={size} height={size} viewBox="0 0 32 32" fill="none" stroke={color} strokeWidth="3"><path d="M1 1L31 31M31 1L1 31" /></svg>
);

const VOL_LEGEND: [string, string, number, number, string][] = [
  ['83.34万', INK, 105, 0.785, '↓'],
  ['MA1:146.9万', '#e9bf22', 176, 0.805, '↓'],
  ['MA2:277.9万', '#c52bc9', 175, 0.805, '↑'],
  ['MA3:161.2万', TEXT_GREEN, 175, 0.805, '↑'],
];

export default function App() {
  return (
    <>
      <Global />
      <Page>
        <StatusBar>
          <StatusGroup>
            <T $s={38} $c={GREY} $ls={0.8}>9:20</T>
            <AppIcons><Weibo /><Weibo /><Pouch /><Weibo /><Caller /></AppIcons>
            <svg width="28" height="8" viewBox="0 0 28 8" fill={GREY}><circle cx="3" cy="4" r="2.800" /><circle cx="13" cy="4" r="2.800" /><circle cx="23" cy="4" r="2.800" /></svg>
          </StatusGroup>
          <StatusGroup>
            <SystemIcons />
            <T $s={36} $c={GREY} $ml={8} $x={68} $ls={-1.5}>80%</T>
          </StatusGroup>
        </StatusBar>

        <Header>
          <HeaderLeft>
            <svg width="31" height="69" viewBox="0 0 31 69" fill="none" stroke="#222" strokeWidth="4.600" strokeLinecap="round"><path d="M28 10L3 35L28 60" /></svg>
            <Logo><T $s={25} $c="#fff" $w={500}>东方</T><T $s={25} $c="#fff" $w={500}>财富</T></Logo>
          </HeaderLeft>
          <HeaderCenter>
            <TitleRow>
              <T $s={47.5} $c="#222">国机重装</T>
              <Verified><T $s={24} $c="#fff" $w={700}>企</T></Verified>
            </TitleRow>
            <CodeRow>
              <T $s={37} $c={GREY} $ls={0.4}>601399</T>
              <Tag $w={38} $ml={5}><T $s={31} $c={GREY}>融</T></Tag>
              <Tag $w={98} $ml={4}><T $s={31} $c={GREY}>沪股通</T></Tag>
              <Tag $w={41} $ml={5}><T $s={32} $c={GREY}>L1</T></Tag>
              <Caret $w={23} $h={15} $c="#c4c4c4" $ml={11} />
            </CodeRow>
          </HeaderCenter>
          <HeaderRight>
            <Robot />
            <svg width="204" height="77" viewBox="848 138 204 77" fill="none" stroke="#2e2e2e" strokeWidth="4.300" strokeLinecap="round" strokeLinejoin="round">
              <path d="M908.500 148.700H893q-3 0-3 3v48q0 3 3 3h48q3 0 3-3V183M925 148.700h19v18.500M943 149.700L915 177" />
              <circle cx="1018.500" cy="172.300" r="26" /><path d="M1037 191L1048.500 202.500" />
            </svg>
          </HeaderRight>
        </Header>

        <Quote>
          <QuoteMain>
            <Cell><Squeezed $s={86} $w={700} $c={GREEN} $ls={-6} $scale={0.95} $ml={2}>3.31</Squeezed></Cell>
            <Cell><T $s={37} $c={TEXT_GREEN} $ls={1}>-0.60%</T><T $s={37} $c={TEXT_GREEN} $ls={1}>-0.02</T></Cell>
            <Cell><Label><T $s={41.5} $c={GREY}>总值</T><Info $lift={6} /></Label><T $s={33}>238.8亿</T></Cell>
          </QuoteMain>
          <QuoteGrid>
            <Cell><T $s={41.5} $c={GREY}>今开</T><T $s={41.5} $c={TEXT_GREEN}>3.32</T></Cell>
            <Cell><T $s={41.5} $c={GREY}>最高</T><T $s={41.5} $c="#d92b2b">3.34</T></Cell>
            <Cell><T $s={41.5} $c={GREY}>最低</T><T $s={41.5} $c={TEXT_GREEN}>3.29</T></Cell>
            <Cell><Label><T $s={41.5} $c={GREY}>换手</T><Info $lift={7} /></Label><T $s={41} $ls={-0.8}>1.16%</T></Cell>
            <Cell><T $s={41.5} $c={GREY}>总手</T><T $s={41.5}>83.34万</T></Cell>
            <Cell><T $s={41.5} $c={GREY}>金额</T><T $s={41.5}>2.76亿</T></Cell>
            <Cell><T $s={41.5} $c={GREY}>流值</T><T $s={41.5}>238.8亿</T></Cell>
            <Cell><Label><T $s={41.5} $c={GREY}>市盈</T><Sup>动</Sup><Info $lift={6} /></Label><T $s={36} $ls={0.3}>53.77</T></Cell>
            <Cell $end><MoreButton><T $s={35.5}>更多</T></MoreButton></Cell>
          </QuoteGrid>
        </Quote>

        <Notice>
          <svg width="52" height="44" viewBox="0 0 52 44" fill="none" stroke="#d8601e" strokeWidth="3.200" strokeLinejoin="round" strokeLinecap="round">
            <path d="M24 3L11.500 11.500H6q-4 0-4 4V29q0 4 4 4h5.500L24 41z" />
            <path d="M31 12.500c7 3 7 16 0 19M33 3c16 4 16 34 0 38" />
          </svg>
          <T $s={38.5} $ml={32} $ls={0.95}>中报预披露：于2025-08-29披露2025年中报</T>
          <Spacer />
          <Cross size={30} color="#999" />
        </Notice>

        <Periods>
          <Period $w={158}><T $s={44}>分时</T></Period>
          <Period $w={160}><T $s={44}>五日</T></Period>
          <Period $w={162} $on><T $s={44}>日K</T><Underline /></Period>
          <Period $w={157}><T $s={44}>周K</T></Period>
          <Period $w={162}><T $s={44}>月K</T></Period>
          <Period $w={178}><Inline><T $s={44}>更多</T><Caret $w={15} $h={13} $c={GREY} $ml={9} /></Inline></Period>
          <GearBox>
            <svg width="54" height="54" viewBox="0 0 54 54" fill="none" stroke={GREY} strokeWidth="3.800" strokeLinejoin="round">
              <path d={gearPath()} /><circle cx="27" cy="27" r="8.500" />
            </svg>
          </GearBox>
        </Periods>

        <Indicators>
          <Chip $w={108}><T $s={34.5}>均线</T><Caret $w={15} $h={12} $c={GREY} $ml={4} /></Chip>
          <T $s={36} $ml={13} $x={155} $ls={0.2}>MA5:3.37</T><Arrow $c={INK} $ml={10}>↓</Arrow>
          <T $s={36} $c="#eebb4d" $ml={11} $x={122} $ls={0.2}>10:3.53</T><Arrow $c="#eebb4d" $ml={9}>↑</Arrow>
          <T $s={36} $c="#bc1a78" $ml={11} $x={122} $ls={0.2}>20:3.29</T><Arrow $c="#bc1a78" $ml={9}>↑</Arrow>
          <Spacer />
          <Chip $w={128}><T $s={35} $ml={3}>DK点</T><Corner /></Chip>
          <Chip $w={134} $ml={37}><T $s={35.5}>前复权</T></Chip>
        </Indicators>

        <MainChart />

        <VolumeRow>
          <Chip $w={152}><T $s={36}>成交量</T><Caret $w={16} $h={12} $c={GREY} $ml={13} /></Chip>
          {VOL_LEGEND.map(([text, color, w, sx, arrow], i) => (
            <Inline key={i}>
              <Squeezed $s={38} $c={color} $x={w} $scale={sx} $ml={i ? 13.5 : 3.5}>{text}</Squeezed>
              <Arrow $c={color} $ml={6.5}>{arrow}</Arrow>
            </Inline>
          ))}
          <Spacer />
          <Collapse>
            <svg width="18" height="30" viewBox="0 0 18 30" fill="none" stroke="#fff" strokeWidth="4.200" strokeLinecap="round" strokeLinejoin="round"><path d="M15 3L3 15L15 27" /></svg>
          </Collapse>
        </VolumeRow>

        <VolumeChart />

        <Banner>
          <svg width="46" height="40" viewBox="0 0 46 40" fill="#ea5504"><path d="M0 13h4v15H0zM9 13L38 2V0h7v40h-7v-3l-11-3v2q-7 2-12-3v-3H9z" /></svg>
          <T $s={39} $ml={54}>可买涨可买跌，期货开户抓行情&gt;&gt;</T>
          <Spacer />
          <Rule />
          <Cross size={33} color={ORANGE} />
        </Banner>

        <InfoTabs>
          {['股吧', '盘口', '资讯', '公告', '研报', '财务', '资料'].map((t, i) => (
            <InfoTab key={t} $on={i === 0}><T $s={43.5}>{t}</T>{i === 0 && <Underline />}</InfoTab>
          ))}
        </InfoTabs>

        <Cards>
          <Card>
            <Art>
              <svg width="260" height="104" viewBox="0 0 260 104">
                <path d="M5 32H50V0H260V104H5z" fill="#fff2f0" />
                <path d="M104 24H226V104H104zM40 82H104V104H40z" fill="#fff8f6" />
                <path d="M126 53H202V104H126z" fill="#fdebea" /><path d="M165 104l20-14v14z" fill="#fff8f6" />
                <path d="M75 101H111V104H75z" fill="#fdebea" />
              </svg>
            </Art>
            <svg width="48" height="48" viewBox="0 0 48 48">
              <defs><linearGradient id="ic" x1="0" y1="0" x2="0" y2="1"><stop offset="0" stopColor="#d84a46" /><stop offset="1" stopColor="#f0a29f" /></linearGradient></defs>
              <circle cx="24" cy="24" r="24" fill="url(#ic)" />
              <path d="M9 20h7v16H9zM18 12h12v24H18zM32 23h7v13h-7z" fill="#fff" />
              <path d="M22.500 20l2.500-1.500V28" fill="none" stroke="#d85a56" strokeWidth="2" />
            </svg>
            <T $s={41.5} $w={500} $ml={13} $c="#262626">人气榜</T>
            <More>
              <svg width="14" height="24" viewBox="0 0 14 24" fill="none" stroke="#aaa" strokeWidth="2.500"><path d="M1 1L12 12L1 23" /></svg>
            </More>
          </Card>
          <Card>
            <Art>
              <svg width="242" height="104" viewBox="0 0 242 104" fontFamily='"Liberation Sans", sans-serif'>
                <path d="M0 0H242V104H12z" fill="#fff1ef" />
                <text x="58" y="160" fontSize="160" fontWeight="700" fontStyle="italic" fill="#fdeae9" stroke="#fff7f5" strokeWidth="34" paintOrder="stroke" strokeLinejoin="round" textLength="180" lengthAdjust="spacingAndGlyphs">VS</text>
              </svg>
            </Art>
            <svg width="48" height="48" viewBox="0 0 48 48">
              <circle cx="24" cy="24" r="24" fill="url(#ic)" />
              <text x="23" y="35" fontSize="29" fontWeight="700" fontStyle="italic" fill="#fff" textAnchor="middle" textLength="30" lengthAdjust="spacingAndGlyphs" fontFamily='"Open Sans", sans-serif'>VS</text>
            </svg>
            <T $s={41.500} $w={500} $ml={13} $c="#262626">多空看盘</T>
          </Card>
        </Cards>

        <BottomBar>
          <IndexBox>
            <Caret $w={22} $h={7} $c="#777" $up />
            <T $s={38} $c={TEXT_GREEN} $mt={14} $ls={0.3} $ml={2}>3559.95</T>
            <IndexRow><T $s={36} $c={GREY}>上证</T><T $s={36} $ls={0.7}>-0.37%</T></IndexRow>
          </IndexBox>
          {['交易', '发帖', '功能', '设自选'].map((t, i) => (
            <Action key={t}>
              <svg width="66" height="60" viewBox="0 1 66 60" fill="none" stroke={GREY} strokeWidth="2.800">{ACTION_ICONS[i]}</svg>
              <T $s={35.5}>{t}</T>
            </Action>
          ))}
        </BottomBar>
      </Page>
    </>
  );
}
